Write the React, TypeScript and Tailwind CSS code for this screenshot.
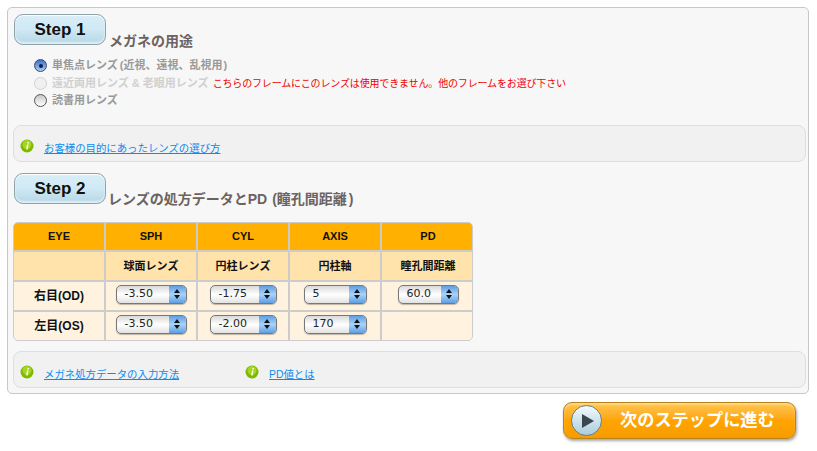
import type { ReactNode } from "react";

const font = "font-['Liberation_Sans','Noto_Sans_CJK_JP',sans-serif]";

function StepBadge({ label }: { label: string }) {
  return (
    <div className="ml-px flex h-[31px] w-[92px] shrink-0 items-center justify-center rounded-[9px] border border-[#8fa3ad] bg-gradient-to-b from-[#d8eef8] via-[#cfe9f5] to-[#b5d6e6] pb-px text-[17px] font-bold leading-none text-[#111] shadow-[inset_0_1px_1px_#fff,inset_0_-2px_2px_rgba(255,255,255,0.6)]">
      {label}
    </div>
  );
}

function Radio({ checked, disabled }: { checked?: boolean; disabled?: boolean }) {
  return (
    <span
      className={
        "flex h-[13px] w-[13px] shrink-0 items-center justify-center rounded-full border " +
        (checked
          ? "border-[#334a78] bg-gradient-to-b from-[#3c6fc4] to-[#a9cdf2]"
          : disabled
            ? "border-[#d2d2d2] bg-[#f0f0f0]"
            : "border-[#555] bg-gradient-to-b from-[#c8c8c8] to-[#ffffff]")
      }
    >
      {checked ? <span className="h-[4px] w-[4px] rounded-full bg-[#0c1f4a]" /> : null}
    </span>
  );
}

function InfoIcon() {
  return (
    <svg width="14" height="14" viewBox="0 0 14 14" className="shrink-0">
      <circle cx="7" cy="7" r="6.5" fill="#7fb800" />
      <circle cx="7" cy="5.5" r="4.5" fill="#a5d61e" />
      <path d="M7.6 3h1.5l-.3 1.4H7.3zM7 5.4h1.5L7.7 10.6H6.2z" fill="#fff" />
    </svg>
  );
}

function InfoLink({ children, className }: { children: ReactNode; className?: string }) {
  return (
    <div className={"flex items-center " + (className ?? "")}>
      <InfoIcon />
      <a href="#" className="ml-[10px] mt-[5px] text-[10.4px] leading-[13px] text-[#0a8cf0] underline">
        {children}
      </a>
    </div>
  );
}

function Select({ value, width }: { value: string; width: number }) {
  return (
    <div
      className="mb-[4px] flex h-[19px] items-stretch overflow-hidden rounded-[5px] border border-[#777] bg-gradient-to-b from-[#d9d9d9] via-[#ffffff] to-[#e2e2e2] shadow-[0_1px_1px_rgba(0,0,0,0.25)]"
      style={{ width }}
    >
      <span className="flex-1 pl-[8px] font-['DejaVu_Sans',sans-serif] text-[11px] font-normal leading-[16px] text-[#222]">
        {value}
      </span>
      <span className="flex w-[17px] flex-col items-center justify-center gap-[2px] bg-gradient-to-b from-[#5d9fe6] via-[#a9d2f8] to-[#5d9fe6]">
        <span className="h-0 w-0 border-x-[3px] border-b-[4px] border-x-transparent border-b-[#111]" />
        <span className="h-0 w-0 border-x-[3px] border-t-[4px] border-x-transparent border-t-[#111]" />
      </span>
    </div>
  );
}

function HeadCell({ children }: { children?: ReactNode }) {
  return (
    <div className="flex items-center justify-center bg-[#ffb000] text-[11px] font-bold text-[#111]">{children}</div>
  );
}

function SubCell({ children }: { children?: ReactNode }) {
  return (
    <div className="flex items-center justify-center bg-[#ffe3ab] text-[11px] font-bold text-[#111]">{children}</div>
  );
}

function BodyCell({ children }: { children?: ReactNode }) {
  return (
    <div className="flex items-center justify-center bg-[#fff3e0] text-[12px] font-bold text-[#111]">{children}</div>
  );
}

export default function App() {
  return (
    <div className={"h-[451px] w-[817px] overflow-hidden bg-white pl-[7px] pt-[7px] " + font}>
      <div className="h-[387px] w-[802px] rounded-[5px] border border-[#c8c8c8] bg-[#f7f7f7] pl-[5px] pr-[2px] pt-[6px]">
        <div className="flex items-start">
          <StepBadge label="Step 1" />
          <h2 className="ml-[3px] mt-[18px] whitespace-nowrap text-[14px] font-bold leading-[18px] text-[#6b6361]">
            メガネの用途
          </h2>
        </div>

        <div className="ml-[21px] mt-[9px] flex flex-col gap-[4.5px] whitespace-nowrap text-[11px] font-bold leading-[13px]">
          <div className="flex items-center gap-[5px] text-[#999]">
            <Radio checked />
            <span>
              単焦点レンズ<span className="ml-[2px]">(</span>近視、遠視、乱視用<span className="ml-px">)</span>
            </span>
          </div>
          <div className="flex items-center gap-[5px] text-[#d0d0d0]">
            <Radio disabled />
            <span>遠近両用レンズ & 老眼用レンズ</span>
            <span className="-ml-[1px] text-[10px] font-normal tracking-[-0.15px] text-[#f00000]">
              こちらのフレームにこのレンズは使用できません。他のフレームをお選び下さい
            </span>
          </div>
          <div className="flex items-center gap-[5px] text-[#999]">
            <Radio />
            <span>読書用レンズ</span>
          </div>
        </div>

        <div className="mt-[18px] flex h-[37px] w-[793px] items-center rounded-[8px] border border-[#dedede] bg-[#f1f1f1] pl-[6px] pt-[4px]">
          <InfoLink>お客様の目的にあったレンズの選び方</InfoLink>
        </div>

        <div className="mt-[11px] flex items-start">
          <StepBadge label="Step 2" />
          <h2 className="ml-[2px] mt-[17px] whitespace-nowrap text-[14px] font-bold leading-[18px] text-[#6b6361]">
            レンズの処方データとPD<span className="ml-[5px]">(</span>瞳孔間距離<span className="ml-[2px]">)</span>
          </h2>
        </div>

        <div className="mt-[14px] grid h-[119px] w-[460px] grid-cols-[90px_90px_90px_90px_92px] grid-rows-[27px_28px_28px_1fr] gap-[2px] overflow-hidden rounded-[5px] border border-[#cccccc] bg-[#cccccc]">
          <HeadCell>EYE</HeadCell>
          <HeadCell>SPH</HeadCell>
          <HeadCell>CYL</HeadCell>
          <HeadCell>AXIS</HeadCell>
          <HeadCell>PD</HeadCell>

          <SubCell />
          <SubCell>球面レンズ</SubCell>
          <SubCell>円柱レンズ</SubCell>
          <SubCell>円柱軸</SubCell>
          <SubCell>瞳孔間距離</SubCell>

          <BodyCell>右目(OD)</BodyCell>
          <BodyCell><Select value="-3.50" width={71} /></BodyCell>
          <BodyCell><Select value="-1.75" width={67} /></BodyCell>
          <BodyCell><Select value="5" width={63} /></BodyCell>
          <BodyCell><Select value="60.0" width={61} /></BodyCell>

          <BodyCell>左目(OS)</BodyCell>
          <BodyCell><Select value="-3.50" width={71} /></BodyCell>
          <BodyCell><Select value="-2.00" width={67} /></BodyCell>
          <BodyCell><Select value="170" width={63} /></BodyCell>
          <BodyCell />
        </div>

        <div className="mt-[10px] flex h-[37px] w-[793px] items-center rounded-[8px] border border-[#dedede] bg-[#f1f1f1] pl-[6px] pt-[4px]">
          <InfoLink className="w-[225px]">メガネ処方データの入力方法</InfoLink>
          <InfoLink>PD値とは</InfoLink>
        </div>
      </div>

      <div className="ml-[556px] mt-[8px] flex h-[37px] w-[233px] items-center rounded-[9px] border border-[#b8831c] bg-gradient-to-b from-[#ffc64a] via-[#ffa400] to-[#f79c00] shadow-[1px_2px_3px_rgba(0,0,0,0.35),inset_0_2px_2px_rgba(255,255,255,0.35)]">
        <span className="ml-[7px] flex h-[31px] w-[31px] items-center justify-center rounded-full border border-[#6b7f88] bg-gradient-to-b from-[#f4fafc] to-[#a9cddd]">
          <svg width="14" height="16" viewBox="0 0 14 16" className="ml-[3px]">
            <path d="M1 1 L13 8 L1 15 Z" fill="#3b4650" />
          </svg>
        </span>
        <span className="ml-[18px] text-[17.2px] font-bold leading-none text-white">次のステップに進む</span>
      </div>
    </div>
  );
}
